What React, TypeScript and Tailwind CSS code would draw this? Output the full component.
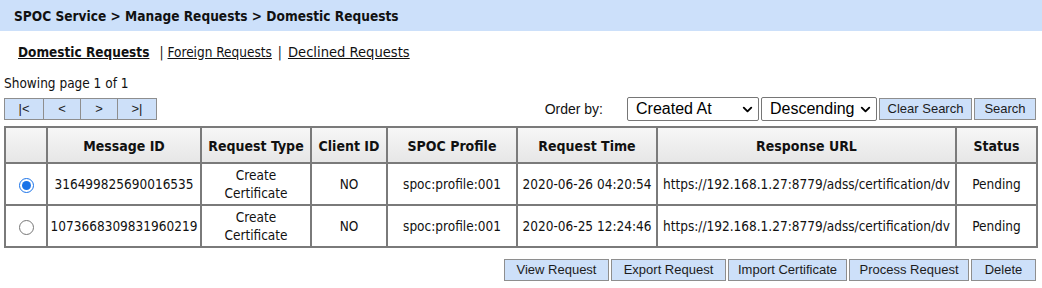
import { ChevronDown } from 'lucide-react';

const ROWS = [
  { id: '316499825690016535', type: 'Create Certificate', client: 'NO', profile: 'spoc:profile:001', time: '2020-06-26 04:20:54', url: 'https://192.168.1.27:8779/adss/certification/dv', status: 'Pending', checked: true },
  { id: '1073668309831960219', type: 'Create Certificate', client: 'NO', profile: 'spoc:profile:001', time: '2020-06-25 12:24:46', url: 'https://192.168.1.27:8779/adss/certification/dv', status: 'Pending', checked: false },
];

const COLS = [
  { label: '', w: 'w-[42px]' },
  { label: 'Message ID', w: 'w-[154px]' },
  { label: 'Request Type', w: 'w-[110px]' },
  { label: 'Client ID', w: 'w-[76px]' },
  { label: 'SPOC Profile', w: 'w-[130px]' },
  { label: 'Request Time', w: 'w-[140px]' },
  { label: 'Response URL', w: 'w-[299px]' },
  { label: 'Status', w: 'w-[81px]' },
];

const TAHOMA = "font-['DejaVu_Sans_Condensed','DejaVu_Sans',sans-serif]";
const ARIAL = "font-['Liberation_Sans',Arial,sans-serif]";

function Btn({ children, className = '' }: { children: React.ReactNode; className?: string }) {
  return (
    <button className={`h-[22px] bg-[#cde0f9] border border-[#8e8e8e] text-[13px] text-[#1c1c1c] ${ARIAL} ${className}`}>
      {children}
    </button>
  );
}

function Select({ value, className = '' }: { value: string; className?: string }) {
  return (
    <div className={`h-[24px] flex items-center justify-between bg-white border border-[#767676] rounded-[2px] pl-[8px] pr-[3px] text-[16px] text-black ${ARIAL} ${className}`}>
      <span>{value}</span>
      <ChevronDown size={15} strokeWidth={3} />
    </div>
  );
}

export default function App() {
  return (
    <div className={`w-[1042px] h-[288px] bg-white text-[#111] ${TAHOMA} overflow-hidden`}>
      {/* breadcrumb */}
      <div className="h-[31px] bg-[#cce0fa] flex items-center pl-[14px] pt-[2px] text-[13.6px] font-bold">
        SPOC Service &gt; Manage Requests &gt; Domestic Requests
      </div>

      {/* tabs */}
      <div className="flex items-center pl-[18px] pt-[2px] text-[13.5px] h-[40px]">
        <span className="font-bold underline">Domestic Requests</span>
        <span className="ml-[10px] mr-[4px]">|</span>
        <span className="underline">Foreign Requests</span>
        <span className="ml-[6px] mr-[6px]">|</span>
        <span className="underline text-[14.6px]">Declined Requests</span>
      </div>

      <div className="pl-[4px] pt-[2px] text-[13.5px] h-[25px]">Showing page 1 of 1</div>

      {/* pager + order */}
      <div className="flex items-center justify-between pl-[4px] pr-[6px] h-[26px]">
        <div className="flex">
          <Btn className="w-[40px]">|&lt;</Btn>
          <Btn className="w-[37px] border-l-0">&lt;</Btn>
          <Btn className="w-[37px] border-l-0">&gt;</Btn>
          <Btn className="w-[39px] border-l-0">&gt;|</Btn>
        </div>
        <div className="flex items-center">
          <span className={`${ARIAL} text-[14px] mr-[24px]`}>Order by:</span>
          <Select value="Created At" className="w-[132px]" />
          <Select value="Descending" className="w-[116px] ml-[2px]" />
          <Btn className="w-[93px] ml-[2px]">Clear Search</Btn>
          <Btn className="w-[62px] ml-[2px]">Search</Btn>
        </div>
      </div>

      {/* table */}
      <div className="pl-[4px] pr-[5px] pt-[4px]">
        <table className="table-fixed border-collapse w-[1033px] border-2 border-[#7a7a7a]">
          <colgroup>
            {COLS.map((c, i) => <col key={i} className={c.w} />)}
          </colgroup>
          <thead>
            <tr className="h-[36px] bg-gradient-to-b from-[#f7f7f7] to-[#e6e6e6]">
              {COLS.map((c, i) => (
                <th key={i} className="border-2 border-[#7a7a7a] text-[14px] font-bold text-center pt-[2px]">{c.label}</th>
              ))}
            </tr>
          </thead>
          <tbody>
            {ROWS.map((r) => (
              <tr key={r.id} className="h-[42px] text-[13.5px] text-center leading-[18px]">
                <td className="border-2 border-[#7a7a7a]">
                  <input type="radio" name="sel" defaultChecked={r.checked} className="w-[15px] h-[15px] align-middle mt-[2px] accent-[#1a73e8]" />
                </td>
                <td className="border-2 border-[#7a7a7a]">{r.id}</td>
                <td className="border-2 border-[#7a7a7a] px-[10px]">{r.type}</td>
                <td className="border-2 border-[#7a7a7a]">{r.client}</td>
                <td className="border-2 border-[#7a7a7a]">{r.profile}</td>
                <td className="border-2 border-[#7a7a7a] whitespace-nowrap">{r.time}</td>
                <td className="border-2 border-[#7a7a7a] whitespace-nowrap text-left pl-[5px]">{r.url}</td>
                <td className="border-2 border-[#7a7a7a]">{r.status}</td>
              </tr>
            ))}
          </tbody>
        </table>
      </div>

      {/* actions */}
      <div className="flex justify-end gap-[2px] pr-[6px] pt-[11px]">
        <Btn className="w-[105px]">View Request</Btn>
        <Btn className="w-[115px]">Export Request</Btn>
        <Btn className="w-[119px]">Import Certificate</Btn>
        <Btn className="w-[120px]">Process Request</Btn>
        <Btn className="w-[65px]">Delete</Btn>
      </div>
    </div>
  );
}
